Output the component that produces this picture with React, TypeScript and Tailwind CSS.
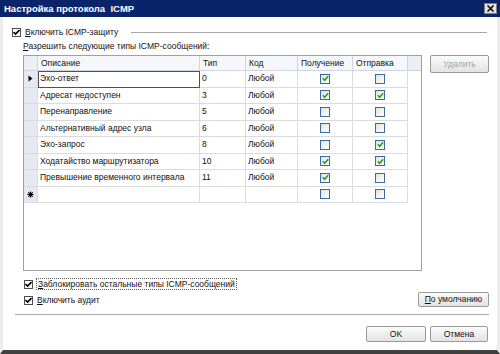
import React from 'react';

const rows: [string, string, boolean, boolean][] = [
  ['Эхо-ответ', '0', true, false],
  ['Адресат недоступен', '3', true, true],
  ['Перенаправление', '5', false, false],
  ['Альтернативный адрес узла', '6', false, false],
  ['Эхо-запрос', '8', false, true],
  ['Ходатайство маршрутизатора', '10', true, true],
  ['Превышение временного интервала', '11', true, false],
];

function ClassicCheck() {
  return (
    <div className="w-[9px] h-[9px] border border-[#505050] bg-white flex items-center justify-center shrink-0">
      <svg width="7" height="7" viewBox="0 0 7 7">
        <path d="M0.5 3 L2.5 5 L6.5 1" stroke="#000" strokeWidth="1.6" fill="none" />
      </svg>
    </div>
  );
}

function GridCheck({ on }: { on: boolean }) {
  return (
    <div className="w-[10px] h-[10px] border border-[#3d6a9a] bg-gradient-to-br from-[#e2e2dc] to-white flex items-center justify-center">
      {on && (
        <svg width="7" height="7" viewBox="0 0 7 7">
          <path d="M0.8 3.3 L2.6 5.2 L6.2 1.2" stroke="#21a121" strokeWidth="1.6" fill="none" />
        </svg>
      )}
    </div>
  );
}

function Btn({ children, w, disabled }: { children: React.ReactNode; w: string; disabled?: boolean }) {
  return (
    <div className={`${w} h-full border border-[#9a9a9a] rounded-[2px] bg-gradient-to-b from-[#fbfbfb] to-[#e3e3e3] flex items-center justify-center ${disabled ? 'text-[#a4a4a4]' : 'text-[#111]'}`}>
      {children}
    </div>
  );
}

const cell = 'border-r border-b border-[#dcdcdc] flex items-center';

export default function App() {
  return (
    <div className="w-[500px] h-[354px] bg-white flex flex-col text-[8.5px] leading-[11px] text-[#111] border-l-[3px] border-r-[3px] border-b-[4px] border-l-[#ececec] border-r-[#ececec] border-b-[#404040]" style={{ fontFamily: '"Liberation Sans", Arial, sans-serif' }}>
      <div className="h-[17px] -mx-[3px] bg-[#0a246a] flex items-center pl-[4px] pr-[3px] shrink-0">
        <span className="text-white font-bold text-[9.5px]">Настройка протокола&nbsp; ICMP</span>
        <div className="ml-auto w-[13px] h-[11px] bg-[#e4e2dc] border border-[#808080] flex items-center justify-center">
          <svg width="7" height="7" viewBox="0 0 7 7">
            <path d="M0.5 0.5 L6.5 6.5 M6.5 0.5 L0.5 6.5" stroke="#000" strokeWidth="1.5" />
          </svg>
        </div>
      </div>

      <div className="flex-1 flex flex-col pl-[9px] pr-[8px]">
        <div className="mt-[10px] h-[10px] flex items-center">
          <ClassicCheck />
          <span className="ml-[4px]"><u>В</u>ключить ICMP-защиту</span>
          <div className="flex-1 ml-[13px] mr-[2px] border-t border-[#a8a8a8]" />
        </div>

        <div className="mt-[4px] pl-[11px]"><u>Р</u>азрешить следующие типы ICMP-сообщений:</div>

        <div className="mt-[3px] pl-[11px] flex gap-[8px] items-start">
          <div className="w-[399px] h-[216px] border border-[#a0a0a0] bg-white">
            <div className="grid grid-cols-[14px_162px_46px_52px_55px_55px_1fr]">
              <div className="h-[15px] bg-[#eceef6] border-r border-b border-[#d0d4e0]" />
              {['Описание', 'Тип', 'Код', 'Получение', 'Отправка'].map((h) => (
                <div key={h} className="h-[15px] pl-[3px] bg-[#f6f7fa] border-r border-b border-[#d0d4e0] flex items-center">{h}</div>
              ))}
              <div className="h-[15px] bg-[#eceef6] border-b border-[#d0d4e0]" />
              {rows.map(([d, t, a, b], i) => (
                <React.Fragment key={d}>
                  <div className={`h-[16.5px] bg-[#e6e9f3] ${cell} justify-center`}>
                    {i === 0 && (
                      <svg width="5" height="7" viewBox="0 0 5 7"><path d="M0.5 0.5 L4.5 3.5 L0.5 6.5 Z" fill="#000" /></svg>
                    )}
                  </div>
                  <div className={`h-[16.5px] pl-[2px] ${cell} ${i === 0 ? 'outline outline-1 -outline-offset-1 outline-[#505050]' : ''}`}>{d}</div>
                  <div className={`h-[16.5px] pl-[2px] ${cell}`}>{t}</div>
                  <div className={`h-[16.5px] pl-[2px] ${cell}`}>Любой</div>
                  <div className={`h-[16.5px] ${cell} justify-center`}><GridCheck on={a} /></div>
                  <div className={`h-[16.5px] ${cell} justify-center`}><GridCheck on={b} /></div>
                  <div className="h-[16.5px]" />
                </React.Fragment>
              ))}
              <div className={`h-[16.5px] bg-[#e6e9f3] ${cell} justify-center`}>
                <svg width="7" height="7" viewBox="0 0 7 7">
                  <path d="M3.5 0.5 V6.5 M0.5 3.5 H6.5 M1.3 1.3 L5.7 5.7 M5.7 1.3 L1.3 5.7" stroke="#000" strokeWidth="1.1" />
                </svg>
              </div>
              <div className={`h-[16.5px] ${cell}`} />
              <div className={`h-[16.5px] ${cell}`} />
              <div className={`h-[16.5px] ${cell}`} />
              <div className={`h-[16.5px] ${cell} justify-center`}><GridCheck on={false} /></div>
              <div className={`h-[16.5px] ${cell} justify-center`}><GridCheck on={false} /></div>
              <div className="h-[16.5px]" />
            </div>
          </div>
          <div className="h-[18px]"><Btn w="w-[59px]" disabled>Удалить</Btn></div>
        </div>

        <div className="mt-[7px] h-[12px] pl-[12px] flex items-center">
          <ClassicCheck />
          <span className="ml-[3px] px-[1px] h-[12px] flex items-center border border-dotted border-[#606060]"><u>З</u>аблокировать остальные типы ICMP-сообщений</span>
        </div>

        <div className="mt-[2px] h-[15px] pl-[12px] flex items-end justify-between">
          <div className="flex items-center h-[11px] mb-[1px]">
            <ClassicCheck />
            <span className="ml-[4px]"><u>В</u>ключить аудит</span>
          </div>
          <div className="h-[15px]"><Btn w="w-[71px]"><span><u>П</u>о умолчанию</span></Btn></div>
        </div>

        <div className="mt-[7px] ml-[3px] border-t border-[#a8a8a8]" />

        <div className="mt-[11px] h-[16px] flex justify-end gap-[4px] pr-[1px]">
          <Btn w="w-[60px]">OK</Btn>
          <Btn w="w-[58px]">Отмена</Btn>
        </div>
      </div>
    </div>
  );
}
